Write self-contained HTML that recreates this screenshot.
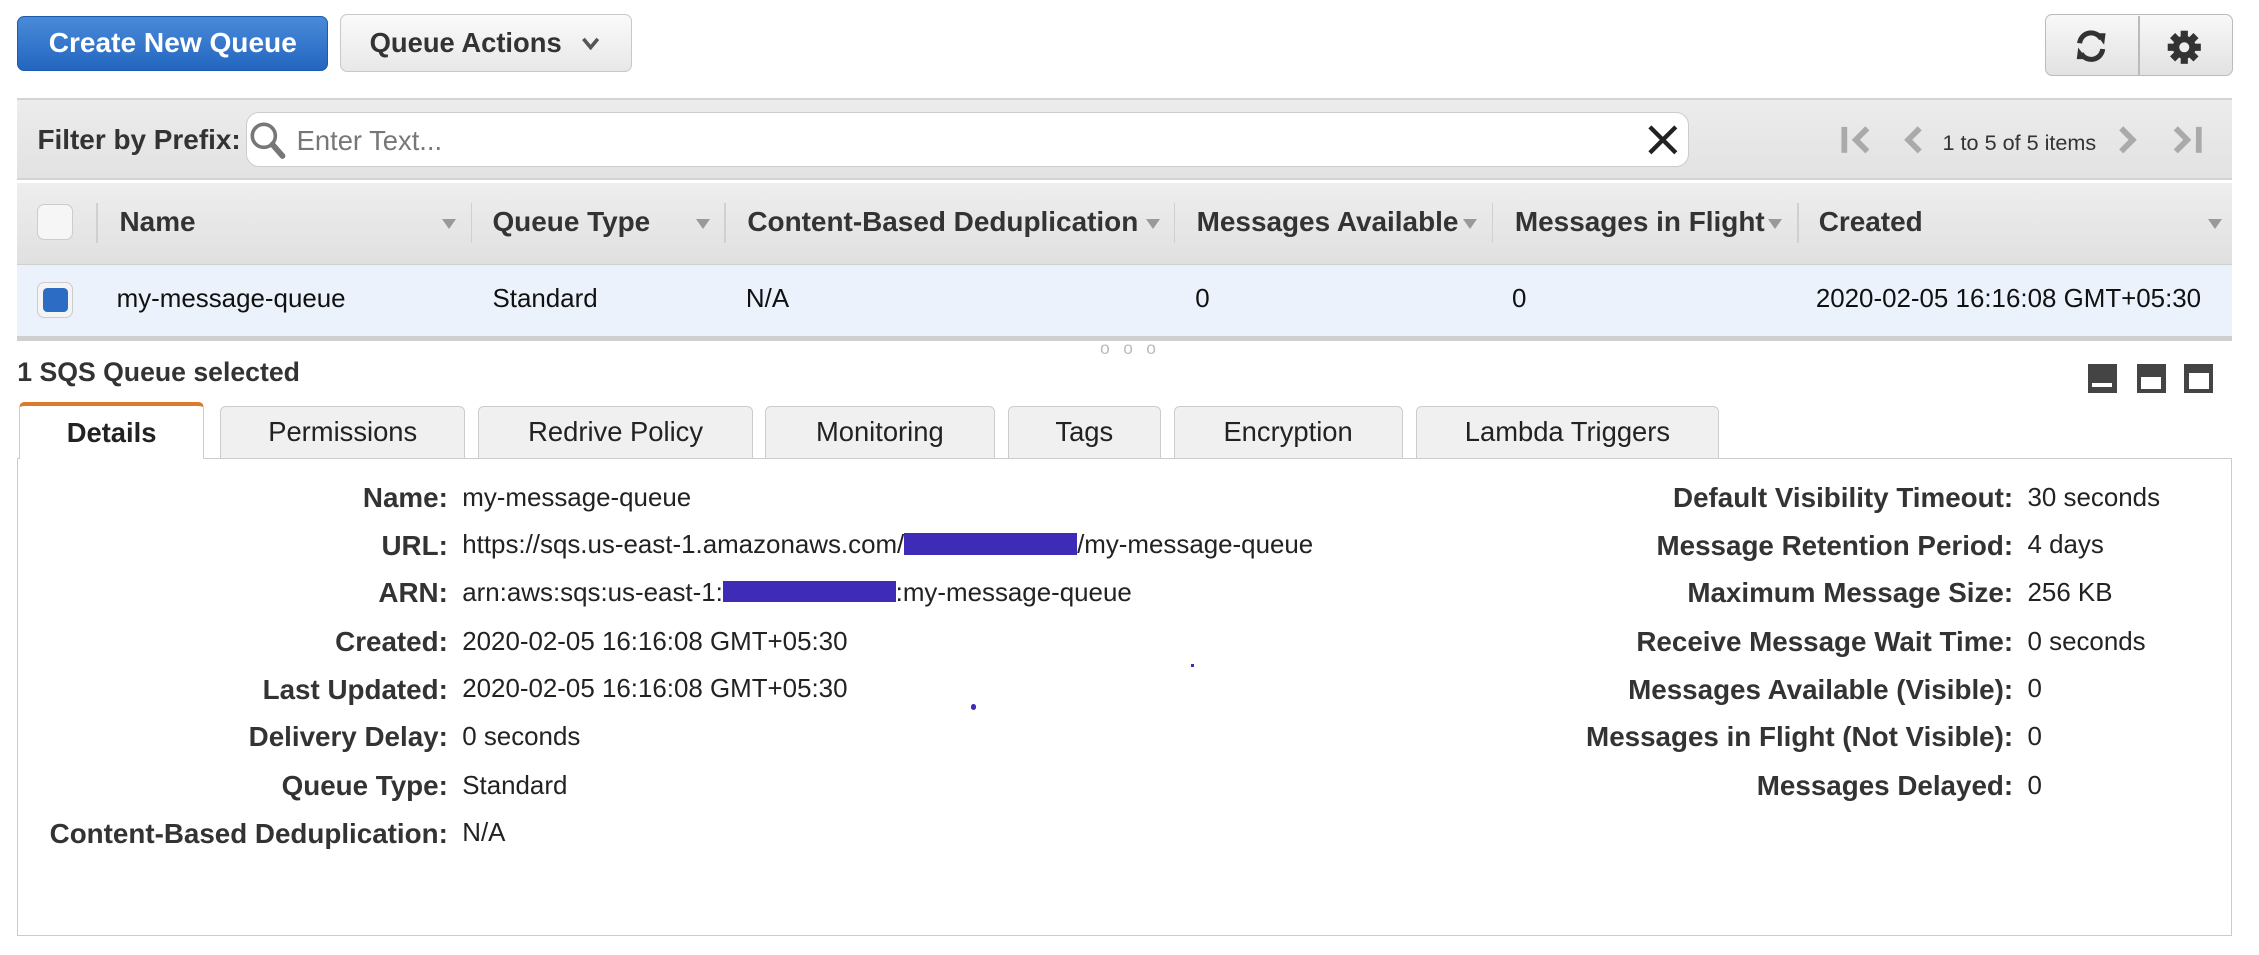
<!DOCTYPE html>
<html><head><style>
html,body{margin:0;padding:0;background:#fff;}
body{width:1569px;height:663px;zoom:1.44;position:relative;overflow:hidden;font-family:"Liberation Sans",Arial,sans-serif;color:#222;}
.a{position:absolute;}
.btn{position:absolute;border-radius:5px;box-sizing:border-box;font-weight:bold;font-size:19px;display:flex;align-items:center;}
.hdr{font-weight:bold;font-size:19.4px;color:#333;top:143px;}
.sep{position:absolute;top:141px;width:1px;height:28px;background:#d0d0d0;}
.arr{position:absolute;top:152px;width:0;height:0;border-left:5px solid transparent;border-right:5px solid transparent;border-top:7px solid #999;}
.row{font-size:18px;top:198px;color:#111;}
.tab{position:absolute;top:282px;height:36px;box-sizing:border-box;background:#f0f0f0;border:1px solid #ccc;border-bottom:none;border-radius:4px 4px 0 0;font-size:19px;display:flex;align-items:center;justify-content:center;color:#222;}
.lab{position:absolute;font-weight:bold;font-size:19.3px;color:#333;text-align:right;white-space:nowrap;}
.val{position:absolute;font-size:18px;color:#222;white-space:nowrap;}
</style></head><body>
<div class="btn" style="left:12px;top:11px;width:216px;height:38px;background:linear-gradient(#4a8ad8,#2266c0);border:1px solid #1d5bb0;color:#fff;justify-content:center;font-size:19.5px;">Create New Queue</div>
<div class="btn" style="left:236px;top:10px;width:203px;height:40px;background:linear-gradient(#fafafa,#e8e8e8);border:1px solid #c8c8c8;color:#333;padding-left:20px;">Queue Actions<svg style="margin-left:14px" width="12" height="10" viewBox="0 0 12 10"><path d="M1 2 L6 8 L11 2" stroke="#555" stroke-width="2.5" fill="none"/></svg></div>
<div class="a" style="left:1420px;top:10px;width:131px;height:43px;box-sizing:border-box;border:1px solid #bbb;border-radius:5px;background:linear-gradient(#f8f8f8,#e2e2e2);"></div>
<div class="a" style="left:1485px;top:11px;width:1px;height:41px;background:#bbb;"></div>
<svg class="a" style="left:1438px;top:18px" width="28" height="28" viewBox="0 0 28 28"><path d="M6 12 A8 8 0 0 1 21 9" stroke="#333" stroke-width="3.5" fill="none"/><path d="M17 5 L24 5 L23 13 Z" fill="#333"/><path d="M22 16 A8 8 0 0 1 7 19" stroke="#333" stroke-width="3.5" fill="none"/><path d="M11 23 L4 23 L5 15 Z" fill="#333"/></svg>
<svg class="a" style="left:1505px;top:21px" width="24" height="24" viewBox="0 0 24 24"><g fill="#333"><circle cx="12" cy="12" r="8"/><rect x="9.5" y="0.5" width="5" height="23"/><rect x="0.5" y="9.5" width="23" height="5"/><rect x="9.5" y="0.5" width="5" height="23" transform="rotate(45 12 12)"/><rect x="9.5" y="0.5" width="5" height="23" transform="rotate(-45 12 12)"/></g><circle cx="12" cy="12" r="3.5" fill="#eee"/></svg>

<div class="a" style="left:12px;top:68px;width:1538px;height:57px;background:linear-gradient(#ececec,#e2e2e2);border-top:2px solid #d4d4d4;border-bottom:2px solid #d4d4d4;box-sizing:border-box;"></div>
<div class="a" style="left:26px;top:86px;font-weight:bold;font-size:19.4px;color:#333;">Filter by Prefix:</div>
<div class="a" style="left:171px;top:78px;width:1002px;height:38px;background:#fff;border:1px solid #ccc;border-radius:9px;box-sizing:border-box;"></div>
<svg class="a" style="left:172px;top:83px" width="28" height="28" viewBox="0 0 28 28"><circle cx="11" cy="11" r="8" stroke="#777" stroke-width="2.5" fill="none"/><path d="M17 17 L24 25" stroke="#777" stroke-width="4" stroke-linecap="round"/></svg>
<div class="a" style="left:206px;top:87px;font-size:19px;color:#777;">Enter Text...</div>
<svg class="a" style="left:1144px;top:86px" width="22" height="22" viewBox="0 0 22 22"><path d="M2 2 L20 20 M20 2 L2 20" stroke="#222" stroke-width="3"/></svg>
<svg class="a" style="left:1278px;top:86px" width="24" height="22" viewBox="0 0 24 22"><rect x="1" y="2" width="4" height="18" fill="#aaa"/><path d="M19 3 L11 11 L19 19" stroke="#aaa" stroke-width="4" fill="none"/></svg>
<svg class="a" style="left:1320px;top:86px" width="18" height="22" viewBox="0 0 18 22"><path d="M13 3 L5 11 L13 19" stroke="#aaa" stroke-width="4" fill="none"/></svg>
<div class="a" style="left:1349px;top:90px;font-size:15px;color:#333;">1 to 5 of 5 items</div>
<svg class="a" style="left:1468px;top:86px" width="18" height="22" viewBox="0 0 18 22"><path d="M5 3 L13 11 L5 19" stroke="#aaa" stroke-width="4" fill="none"/></svg>
<svg class="a" style="left:1507px;top:86px" width="24" height="22" viewBox="0 0 24 22"><path d="M4 3 L12 11 L4 19" stroke="#aaa" stroke-width="4" fill="none"/><rect x="18" y="2" width="4" height="18" fill="#aaa"/></svg>

<div class="a" style="left:12px;top:127px;width:1538px;height:57px;background:linear-gradient(#eeeeee,#e0e0e0);border-bottom:1px solid #d0d0d0;box-sizing:border-box;"></div>
<div class="a" style="left:26px;top:142px;width:25px;height:25px;border:1px solid #ccc;border-radius:5px;background:#f6f6f6;box-sizing:border-box;"></div>
<div class="sep" style="left:67px"></div>
<div class="a hdr" style="left:83px">Name</div><div class="arr" style="left:307px"></div>
<div class="sep" style="left:327px"></div>
<div class="a hdr" style="left:342px">Queue Type</div><div class="arr" style="left:483px"></div>
<div class="sep" style="left:503px"></div>
<div class="a hdr" style="left:519px">Content-Based Deduplication</div><div class="arr" style="left:796px"></div>
<div class="sep" style="left:815px"></div>
<div class="a hdr" style="left:831px">Messages Available</div><div class="arr" style="left:1016px"></div>
<div class="sep" style="left:1036px"></div>
<div class="a hdr" style="left:1052px">Messages in Flight</div><div class="arr" style="left:1228px"></div>
<div class="sep" style="left:1248px"></div>
<div class="a hdr" style="left:1263px">Created</div><div class="arr" style="left:1533px"></div>

<div class="a" style="left:12px;top:184px;width:1538px;height:49px;background:#ebf2fc;"></div>
<div class="a" style="left:26px;top:196px;width:25px;height:25px;border:1px solid #ccc;border-radius:5px;background:#f4f4f4;box-sizing:border-box;"></div>
<div class="a" style="left:30px;top:200px;width:17px;height:17px;border-radius:3px;background:#2c6cc4;"></div>
<div class="a row" style="left:81px">my-message-queue</div>
<div class="a row" style="left:342px">Standard</div>
<div class="a row" style="left:518px">N/A</div>
<div class="a row" style="left:830px">0</div>
<div class="a row" style="left:1050px">0</div>
<div class="a row" style="left:1261px">2020-02-05 16:16:08 GMT+05:30</div>
<div class="a" style="left:12px;top:233px;width:1538px;height:4px;background:#cfcfcf;"></div>
<div class="a" style="left:764px;top:235px;font-size:12px;color:#bbb;letter-spacing:3px;">o o o</div>

<div class="a" style="left:12px;top:248px;font-weight:bold;font-size:18.5px;color:#333;">1 SQS Queue selected</div>
<div class="a" style="left:1450px;top:253px;width:20px;height:20px;background:#444;"></div><div class="a" style="left:1453px;top:266px;width:14px;height:3px;background:#fff;"></div>
<div class="a" style="left:1484px;top:253px;width:20px;height:20px;background:#444;"></div><div class="a" style="left:1487px;top:262px;width:14px;height:8px;background:#fff;"></div>
<div class="a" style="left:1517px;top:253px;width:20px;height:20px;background:#444;"></div><div class="a" style="left:1520px;top:259px;width:14px;height:11px;background:#fff;"></div>

<div class="a" style="left:12px;top:318px;width:1538px;height:332px;border:1px solid #ccc;box-sizing:border-box;"></div>
<div class="tab" style="left:13px;top:279px;width:129px;height:40px;background:#fff;border-top:3px solid #dd7a2a;font-weight:bold;">Details</div>
<div class="tab" style="left:153px;width:170px;">Permissions</div>
<div class="tab" style="left:332px;width:191px;">Redrive Policy</div>
<div class="tab" style="left:531px;width:160px;">Monitoring</div>
<div class="tab" style="left:700px;width:106px;">Tags</div>
<div class="tab" style="left:815px;width:159px;">Encryption</div>
<div class="tab" style="left:983px;width:211px;">Lambda Triggers</div>

<div class="lab" style="right:1258px;top:335px">Name:</div><div class="val" style="left:321px;top:336px">my-message-queue</div>
<div class="lab" style="right:1258px;top:368px">URL:</div><div class="val" style="left:321px;top:369px">https://sqs.us-east-1.amazonaws.com/<span style="display:inline-block;width:120px;height:15px;background:#3e2bb8;vertical-align:-1px"></span>/my-message-queue</div>
<div class="lab" style="right:1258px;top:401px">ARN:</div><div class="val" style="left:321px;top:402px">arn:aws:sqs:us-east-1:<span style="display:inline-block;width:120px;height:15px;background:#3e2bb8;vertical-align:-1px"></span>:my-message-queue</div>
<div class="lab" style="right:1258px;top:435px">Created:</div><div class="val" style="left:321px;top:436px">2020-02-05 16:16:08 GMT+05:30</div>
<div class="lab" style="right:1258px;top:468px">Last Updated:</div><div class="val" style="left:321px;top:469px">2020-02-05 16:16:08 GMT+05:30</div>
<div class="lab" style="right:1258px;top:501px">Delivery Delay:</div><div class="val" style="left:321px;top:502px">0 seconds</div>
<div class="lab" style="right:1258px;top:535px">Queue Type:</div><div class="val" style="left:321px;top:536px">Standard</div>
<div class="lab" style="right:1258px;top:568px">Content-Based Deduplication:</div><div class="val" style="left:321px;top:569px">N/A</div>

<div class="lab" style="right:171px;top:335px">Default Visibility Timeout:</div><div class="val" style="left:1408px;top:336px">30 seconds</div>
<div class="lab" style="right:171px;top:368px">Message Retention Period:</div><div class="val" style="left:1408px;top:369px">4 days</div>
<div class="lab" style="right:171px;top:401px">Maximum Message Size:</div><div class="val" style="left:1408px;top:402px">256 KB</div>
<div class="lab" style="right:171px;top:435px">Receive Message Wait Time:</div><div class="val" style="left:1408px;top:436px">0 seconds</div>
<div class="lab" style="right:171px;top:468px">Messages Available (Visible):</div><div class="val" style="left:1408px;top:469px">0</div>
<div class="lab" style="right:171px;top:501px">Messages in Flight (Not Visible):</div><div class="val" style="left:1408px;top:502px">0</div>
<div class="lab" style="right:171px;top:535px">Messages Delayed:</div><div class="val" style="left:1408px;top:536px">0</div>

<div class="a" style="left:827px;top:461px;width:2px;height:2px;background:#3e2bb8;"></div>
<div class="a" style="left:674px;top:489px;width:4px;height:4px;border-radius:2px;background:#3e2bb8;"></div>
</body></html>
